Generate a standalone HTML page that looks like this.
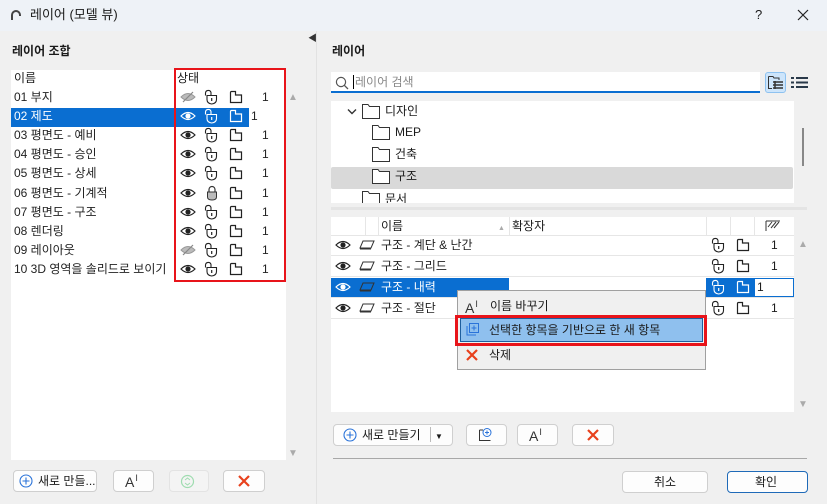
<!DOCTYPE html>
<html><head><meta charset="utf-8"><style>
*{margin:0;padding:0;box-sizing:border-box}
body{width:827px;height:504px;overflow:hidden;background:#f0f0f0;font-family:"Liberation Sans","Noto Sans CJK KR",sans-serif;font-size:12px;color:#1a1a1a;position:relative}
.a{position:absolute}
.t{position:absolute;white-space:nowrap;line-height:14px}
.btn{position:absolute;background:#fdfdfd;border:1px solid #cfcfcf;border-radius:4px}
svg.i{position:absolute}
.ai{position:absolute;font-size:14px;line-height:14px;color:#333}
.ai span{font-size:9px;position:relative;top:-6px;left:1px}
</style></head><body>
<svg width="0" height="0" style="position:absolute">
<defs>
<symbol id="eye" viewBox="0 0 16 10"><path d="M1 5Q8 -2 15 5Q8 12 1 5Z" fill="none" stroke="currentColor" stroke-width="1.2"/><circle cx="8" cy="5" r="2.6" fill="currentColor"/></symbol>
<symbol id="eyeoff" viewBox="0 0 16 12"><path d="M1 6Q8 -1 15 6Q8 13 1 6Z" fill="#bbb" stroke="#999" stroke-width="1"/><path d="M3 11L13 1" stroke="#888" stroke-width="1.2"/></symbol>
<symbol id="lock" viewBox="0 0 14 16"><path d="M1.5 6.5V4A2.8 2.8 0 0 1 7 3.5V6" fill="none" stroke="currentColor" stroke-width="1.1"/><path d="M3 6.5H12.5V10.5Q12.5 14.5 7.7 15Q3 14.5 3 10.5Z" fill="none" stroke="currentColor" stroke-width="1.1"/><path d="M7.7 9V12" stroke="currentColor" stroke-width="1.2"/></symbol>
<symbol id="lockc" viewBox="0 0 14 16"><path d="M4 7V4.5A3 3 0 0 1 10 4.5V7" fill="none" stroke="#333" stroke-width="1.2"/><path d="M2.5 7H11.5V12Q11.5 15 7 15Q2.5 15 2.5 12Z" fill="#bbb" stroke="#333" stroke-width="1"/></symbol>
<symbol id="pg" viewBox="0 0 14 14"><path d="M1.5 12.5V2.5Q1.5 1.5 2.5 1.5H6.5V5H12.5V12.5Z" fill="none" stroke="currentColor" stroke-width="1.2"/></symbol>
<symbol id="fld" viewBox="0 0 18 15"><path d="M0.5 2.5V0.5H6L7.5 2.5H17.5V14.5H0.5Z" fill="#fff" stroke="#333" stroke-width="1"/></symbol>
<symbol id="plane" viewBox="0 0 16 10"><path d="M4 1H15L12 8H1Z" fill="none" stroke="#333" stroke-width="1"/><path d="M1 9H12" stroke="#333"/></symbol>
<symbol id="x" viewBox="0 0 14 14"><path d="M2 2L12 12M12 2L2 12" stroke="#e8401c" stroke-width="2.2"/></symbol>
<symbol id="plus" viewBox="0 0 14 14"><circle cx="7" cy="7" r="6" fill="none" stroke="#2a73d9" stroke-width="1.1"/><path d="M7 3.5V10.5M3.5 7H10.5" stroke="#2a73d9" stroke-width="1.1"/></symbol>
</defs></svg>

<div class="a" style="left:0;top:0;width:827px;height:31px;background:#eef2f7"></div>
<svg class="i" style="left:10px;top:9px" width="12" height="12" viewBox="0 0 12 12"><path d="M2 11V6A4 4 0 0 1 10 6V7" fill="none" stroke="#444" stroke-width="2"/></svg>
<div class="t" style="left:30px;top:8px;font-size:13px">레이어 (모델 뷰)</div>
<div class="t" style="left:755px;top:8px;font-size:13px">?</div>
<svg class="i" style="left:797px;top:9px" width="12" height="12"><path d="M1 1L11 11M11 1L1 11" stroke="#222" stroke-width="1.2"/></svg>

<div class="t" style="left:12px;top:44px;font-weight:bold">레이어 조합</div>
<div class="a" style="left:11px;top:70px;width:275px;height:390px;background:#fff"></div>
<div class="t" style="left:14px;top:71px">이름</div>
<div class="t" style="left:177px;top:71px">상태</div>
<div class="a" style="left:11px;top:108px;width:275px;height:19px;background:#0a6ed1"></div>
<div class="a" style="left:249px;top:108px;width:37px;height:19px;background:#fff"></div>
<div id="lrows"></div>
<div class="a" style="left:174px;top:68px;width:112px;height:214px;border:2px solid #e8141a"></div>
<div class="t" style="left:288px;top:91px;color:#aaa;font-size:10px">▲</div>
<div class="t" style="left:288px;top:447px;color:#aaa;font-size:10px">▼</div>

<div class="btn" style="left:13px;top:470px;width:84px;height:22px"></div>
<svg class="i" style="left:19px;top:474px" width="14" height="14"><use href="#plus"/></svg>
<div class="t" style="left:38px;top:474px">새로 만들...</div>
<div class="btn" style="left:113px;top:470px;width:41px;height:22px"></div>
<div class="ai" style="left:125px;top:475px">A<span>I</span></div>
<div class="btn" style="left:169px;top:470px;width:40px;height:22px;background:#f4f4f4;border-color:#e3e3e3"></div>
<svg class="i" style="left:180px;top:474px" width="15" height="15"><circle cx="7.5" cy="7.5" r="6" fill="none" stroke="#9fdcb0" stroke-width="1.2"/><path d="M5 6L7.5 4L10 6M5 9L7.5 11L10 9" fill="none" stroke="#9fdcb0"/></svg>
<div class="btn" style="left:223px;top:470px;width:42px;height:22px"></div>
<svg class="i" style="left:237px;top:474px" width="14" height="14"><use href="#x"/></svg>

<div class="a" style="left:316px;top:31px;width:1px;height:473px;background:#e2e2e2"></div>
<div class="t" style="left:308px;top:31px;font-size:9px;color:#333">◀</div>

<div class="t" style="left:332px;top:44px;font-weight:bold">레이어</div>
<div class="a" style="left:331px;top:72px;width:429px;height:21px;background:#fff;border-bottom:2px solid #0a6ed1"></div>
<svg class="i" style="left:335px;top:76px" width="14" height="14"><circle cx="6" cy="6" r="4.6" fill="none" stroke="#555" stroke-width="1.2"/><path d="M9.3 9.3L13 13" stroke="#555" stroke-width="1.3"/></svg>
<div class="a" style="left:353px;top:75px;width:1px;height:14px;background:#000"></div>
<div class="t" style="left:355px;top:75px;color:#888">레이어 검색</div>
<div class="a" style="left:765px;top:72px;width:21px;height:21px;background:#cde5fb;border:1px solid #8ec2f0;border-radius:3px"></div>
<svg class="i" style="left:768px;top:75px" width="16" height="15"><path d="M0.5 1.5H5L6 3H11V5" fill="none" stroke="#333"/><path d="M0.5 1.5V13.5H4" fill="none" stroke="#333"/><path d="M5 7H15M5 10H15M5 13H15M7 6V14" stroke="#333" stroke-width="1.5"/></svg>
<svg class="i" style="left:791px;top:76px" width="17" height="13"><path d="M0 2H3M5 2H17M0 6.5H3M5 6.5H17M0 11H3M5 11H17" stroke="#2a3a4a" stroke-width="2"/></svg>

<div class="a" style="left:331px;top:101px;width:463px;height:102px;background:#fff;overflow:hidden">
 <div class="a" style="left:0;top:66px;width:462px;height:22px;background:#d9d9d9;border-radius:2px"></div>
 <svg class="i" style="left:16px;top:7px" width="10" height="8"><path d="M1 1.5L5 5.5L9 1.5" fill="none" stroke="#333" stroke-width="1.4"/></svg>
 <svg class="i" style="left:31px;top:3px" width="18" height="15"><use href="#fld"/></svg>
 <div class="t" style="left:54px;top:3px">디자인</div>
 <svg class="i" style="left:41px;top:24px" width="18" height="15"><use href="#fld"/></svg>
 <div class="t" style="left:64px;top:24px">MEP</div>
 <svg class="i" style="left:41px;top:46px" width="18" height="15"><use href="#fld"/></svg>
 <div class="t" style="left:64px;top:46px">건축</div>
 <svg class="i" style="left:41px;top:68px" width="18" height="15"><use href="#fld"/></svg>
 <div class="t" style="left:64px;top:68px">구조</div>
 <svg class="i" style="left:31px;top:90px" width="18" height="15"><use href="#fld"/></svg>
 <div class="t" style="left:54px;top:91px">문서</div>
</div>
<div class="a" style="left:802px;top:128px;width:2px;height:38px;background:#888"></div>
<div class="a" style="left:331px;top:207px;width:476px;height:3px;background:#e4e4e4"></div>

<div class="a" style="left:331px;top:217px;width:463px;height:195px;background:#fff"></div>
<div class="a" style="left:331px;top:235px;width:463px;height:1px;background:#e6e6e6"></div>
<div class="a" style="left:365px;top:217px;width:1px;height:18px;background:#e6e6e6"></div>
<div class="a" style="left:378px;top:217px;width:1px;height:18px;background:#e6e6e6"></div>
<div class="a" style="left:509px;top:217px;width:1px;height:18px;background:#e6e6e6"></div>
<div class="a" style="left:706px;top:217px;width:1px;height:18px;background:#e6e6e6"></div>
<div class="a" style="left:730px;top:217px;width:1px;height:18px;background:#e6e6e6"></div>
<div class="a" style="left:754px;top:217px;width:1px;height:18px;background:#e6e6e6"></div>
<div class="t" style="left:381px;top:219px">이름</div>
<div class="t" style="left:498px;top:222px;font-size:7px;color:#aaa">▲</div>
<div class="t" style="left:512px;top:219px">확장자</div>
<svg class="i" style="left:765px;top:220px" width="16" height="12"><path d="M1 1H15M1 1V11M3 7L7 2M6 8L11 2M9 8L14 2" stroke="#333" stroke-width="1"/></svg>
<div class="a" style="left:331px;top:278px;width:463px;height:19px;background:#0a6ed1"></div>
<div class="a" style="left:509px;top:278px;width:197px;height:19px;background:#fff"></div>
<div class="a" style="left:755px;top:279px;width:38px;height:17px;background:#fff"></div>
<div id="rrows"></div>
<div class="t" style="left:798px;top:238px;color:#aaa;font-size:10px">▲</div>
<div class="t" style="left:798px;top:398px;color:#aaa;font-size:10px">▼</div>

<div class="a" style="left:457px;top:290px;width:249px;height:80px;background:#f0f0f0;border:1px solid #a0a0a0"></div>
<div class="ai" style="left:465px;top:301px">A<span>I</span></div>
<div class="t" style="left:490px;top:299px">이름 바꾸기</div>
<div class="a" style="left:455px;top:315px;width:252px;height:31px;border:3px solid #e8141a"></div>
<div class="a" style="left:460px;top:318px;width:243px;height:24px;background:#8fc0ee;border:1px solid #1e5f9e"></div>
<svg class="i" style="left:465px;top:322px" width="15" height="15"><path d="M2 4V13H11" fill="none" stroke="#2a73d9"/><rect x="4.5" y="1.5" width="9" height="9" fill="none" stroke="#2a73d9"/><path d="M9 3.5V8.5M6.5 6H11.5" stroke="#2a73d9"/></svg>
<div class="t" style="left:489px;top:323px">선택한 항목을 기반으로 한 새 항목</div>
<svg class="i" style="left:465px;top:348px" width="14" height="14"><use href="#x"/></svg>
<div class="t" style="left:489px;top:348px">삭제</div>

<div class="btn" style="left:333px;top:424px;width:120px;height:22px"></div>
<svg class="i" style="left:343px;top:428px" width="14" height="14"><use href="#plus"/></svg>
<div class="t" style="left:362px;top:428px">새로 만들기</div>
<div class="a" style="left:430px;top:427px;width:1px;height:15px;background:#bbb"></div>
<div class="t" style="left:435px;top:430px;font-size:8px">▼</div>
<div class="btn" style="left:466px;top:424px;width:41px;height:22px"></div>
<svg class="i" style="left:478px;top:427px" width="15" height="15"><path d="M1.5 3V13.5H12.5" fill="none" stroke="#333"/><path d="M1.5 3H5" stroke="#333"/><circle cx="9" cy="5.5" r="4" fill="#fff" stroke="#2a73d9"/><path d="M9 3.5V7.5M7 5.5H11" stroke="#2a73d9"/></svg>
<div class="btn" style="left:517px;top:424px;width:41px;height:22px"></div>
<div class="ai" style="left:529px;top:429px">A<span>I</span></div>
<div class="btn" style="left:572px;top:424px;width:42px;height:22px"></div>
<svg class="i" style="left:586px;top:428px" width="14" height="14"><use href="#x"/></svg>
<div class="a" style="left:333px;top:458px;width:474px;height:1px;background:#a8a8a8"></div>
<div class="btn" style="left:622px;top:471px;width:86px;height:22px"></div>
<div class="t" style="left:654px;top:475px">취소</div>
<div class="btn" style="left:727px;top:471px;width:81px;height:22px;border-color:#1f6ab8"></div>
<div class="t" style="left:755px;top:475px">확인</div>

<script>
var L=[["01 부지","off","o"],["02 제도","on","o"],["03 평면도 - 예비","on","o"],["04 평면도 - 승인","on","o"],["05 평면도 - 상세","on","o"],["06 평면도 - 기계적","on","c"],["07 평면도 - 구조","on","o"],["08 렌더링","on","o"],["09 레이아웃","off","o"],["10 3D 영역을 솔리드로 보이기","on","o"]];
var h="";
L.forEach(function(r,i){var y=90+i*19.1,s=i==1,c=s?"#fff":"#222",cc=s?"color:#fff":"color:#222";
h+='<div class="t" style="left:14px;top:'+y+'px;color:'+c+'">'+r[0]+'</div>';
h+=r[1]=="on"?'<svg class="i" style="left:180px;top:'+(y+2)+'px;'+cc+'" width="16" height="10"><use href="#eye"/></svg>':'<svg class="i" style="left:180px;top:'+(y+1)+'px" width="16" height="12"><use href="#eyeoff"/></svg>';
h+=r[2]=="o"?'<svg class="i" style="left:204px;top:'+(y-1)+'px;'+cc+'" width="14" height="16"><use href="#lock"/></svg>':'<svg class="i" style="left:205px;top:'+(y-1)+'px" width="14" height="16"><use href="#lockc"/></svg>';
h+='<svg class="i" style="left:229px;top:'+y+'px;'+cc+'" width="14" height="14"><use href="#pg"/></svg>';
h+='<div class="t" style="left:'+(s?251:262)+'px;top:'+y+'px;color:#222">1</div>';});
document.getElementById("lrows").outerHTML=h;
var R=["구조 - 계단 &amp; 난간","구조 - 그리드","구조 - 내력","구조 - 절단"];h="";
R.forEach(function(n,i){var y=238+i*21,s=i==2,cc=s?"color:#fff":"color:#222";
h+='<div class="a" style="left:331px;top:'+(y+17)+'px;width:463px;height:1px;background:#e6e6e6"></div>';
h+='<svg class="i" style="left:335px;top:'+(y+2)+'px;'+cc+'" width="16" height="10"><use href="#eye"/></svg>';
h+='<svg class="i" style="left:359px;top:'+(y+2)+'px" width="16" height="10"><use href="#plane"/></svg>';
h+='<div class="t" style="left:381px;top:'+y+'px;color:'+(s?'#fff':'#222')+'">'+n+'</div>';
h+='<svg class="i" style="left:711px;top:'+(y-1)+'px;'+cc+'" width="14" height="16"><use href="#lock"/></svg>';
h+='<svg class="i" style="left:736px;top:'+y+'px;'+cc+'" width="14" height="14"><use href="#pg"/></svg>';
h+='<div class="t" style="left:'+(s?757:771)+'px;top:'+y+'px">1</div>';});
document.getElementById("rrows").outerHTML=h;
</script>
</body></html>
